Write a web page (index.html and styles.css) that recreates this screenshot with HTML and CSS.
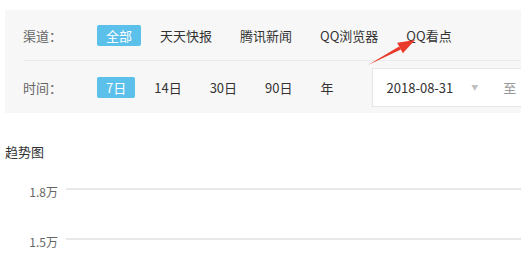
FILE: index.html
```html
<!DOCTYPE html>
<html lang="zh-CN">
<head>
<meta charset="utf-8">
<title>趋势</title>
<link rel="stylesheet" href="styles.css">
</head>
<body>
<div class="page">
  <div class="panel">
    <div class="row row-channel">
      <span class="label">渠道：</span>
      <div class="items">
        <span class="item active">全部</span>
        <span class="item">天天快报</span>
        <span class="item">腾讯新闻</span>
        <span class="item">QQ浏览器</span>
        <span class="item">QQ看点</span>
      </div>
    </div>
    <div class="row row-time">
      <span class="label">时间：</span>
      <div class="items">
        <span class="item active">7日</span>
        <span class="item">14日</span>
        <span class="item">30日</span>
        <span class="item">90日</span>
        <span class="item">年</span>
      </div>
      <div class="date-box">
        <span class="date">2018-08-31</span>
        <span class="caret">▼</span>
        <span class="to">至</span>
      </div>
    </div>
  </div>
  <div class="trend-title">趋势图</div>
  <div class="chart">
    <div class="chart-row"><span class="axis">1.8万</span><span class="grid"></span></div>
    <div class="chart-row"><span class="axis">1.5万</span><span class="grid"></span></div>
  </div>
</div>
<svg class="arrow" viewBox="0 0 531 272" width="531" height="272" xmlns="http://www.w3.org/2000/svg">
  <polygon points="368,65 400.9,49.6 399.1,46.4" fill="#e8392b"/>
  <polygon points="415,40 402.8,53.3 397.2,42.7" fill="#e8392b"/>
</svg>
</body>
</html>
```
FILE: styles.css
```css
html, body {
  margin: 0;
  padding: 0;
  background: #ffffff;
  font-family: "Noto Sans CJK SC", "Microsoft YaHei", "Noto Sans", sans-serif;
  font-size: 13px;
  color: #333333;
}
.page {
  width: 516px;
  margin-left: 5px;
  padding-top: 10px;
}
.panel {
  background: #f7f7f7;
  overflow: hidden;
}
.row {
  display: flex;
  align-items: center;
  margin-left: 18px;
}
.row-channel {
  height: 50px;
  border-bottom: 1px solid #ebebeb;
}
.row-time {
  height: 52px;
}
.label {
  width: 74px;
  color: #666666;
  flex: none;
}
.items {
  display: flex;
  gap: 10px;
  flex: none;
}
.item {
  padding: 0 9px;
  height: 21px;
  line-height: 21px;
  border-radius: 2px;
  color: #333333;
  white-space: nowrap;
}
.item.active {
  background: #5cc1ea;
  color: #ffffff;
}
.date-box {
  flex: none;
  margin-left: 29px;
  width: 180px;
  height: 37px;
  background: #ffffff;
  border: 1px solid #e6e6e6;
  display: flex;
  align-items: center;
  padding-left: 14px;
  box-sizing: content-box;
}
.date {
  color: #333333;
}
.caret {
  margin-left: 18px;
  font-size: 7px;
  color: #c0c0c0;
}
.to {
  margin-left: 25px;
  color: #999999;
}
.trend-title {
  margin-top: 30px;
  line-height: 18px;
  color: #333333;
}
.chart {
  margin-top: 21px;
  display: flex;
  flex-direction: column;
  gap: 30px;
}
.chart-row {
  display: flex;
  align-items: center;
  height: 20px;
}
.axis {
  width: 53px;
  text-align: right;
  font-size: 12px;
  line-height: 20px;
  color: #666666;
  flex: none;
}
.grid {
  flex: 1;
  height: 2px;
  margin-left: 8px;
  margin-bottom: 6px;
  background: #e8e8e8;
}
.arrow {
  position: absolute;
  left: 0;
  top: 0;
  pointer-events: none;
}
```
